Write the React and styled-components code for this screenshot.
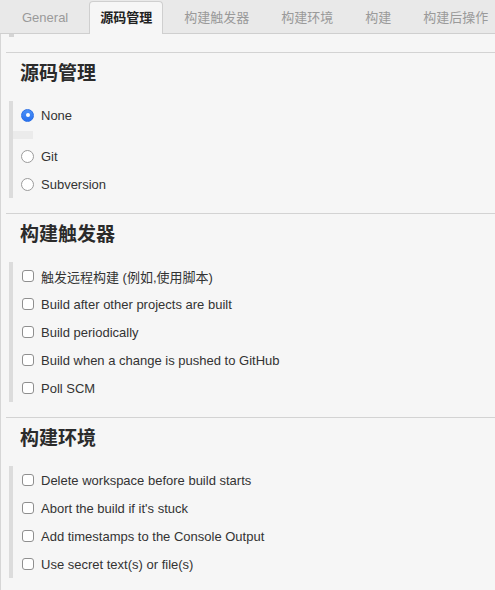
import React from "react";
import styled, { createGlobalStyle } from "styled-components";

const GlobalStyle = createGlobalStyle`
  html, body {
    margin: 0;
    padding: 0;
    background: #f6f6f6;
  }
  body {
    font-family: "Liberation Sans", "Noto Sans CJK SC", Arial, sans-serif;
    font-size: 13px;
    color: #333;
  }
`;

const tabs = ["General", "源码管理", "构建触发器", "构建环境", "构建", "构建后操作"];

const sections = [
  {
    title: "源码管理",
    kind: "radio",
    items: [
      { label: "None", checked: true, spacer: true },
      { label: "Git" },
      { label: "Subversion" },
    ],
  },
  {
    title: "构建触发器",
    kind: "checkbox",
    items: [
      { label: "触发远程构建 (例如,使用脚本)" },
      { label: "Build after other projects are built" },
      { label: "Build periodically" },
      { label: "Build when a change is pushed to GitHub" },
      { label: "Poll SCM" },
    ],
  },
  {
    title: "构建环境",
    kind: "checkbox",
    items: [
      { label: "Delete workspace before build starts" },
      { label: "Abort the build if it's stuck" },
      { label: "Add timestamps to the Console Output" },
      { label: "Use secret text(s) or file(s)" },
    ],
  },
];

export default function App() {
  return (
    <Page>
      <GlobalStyle />
      <TabBar>
        {tabs.map((t, i) => (
          <Tab key={t} $active={i === 1}>
            {t}
          </Tab>
        ))}
      </TabBar>
      <Content>
        <TopMarker />
        {sections.map((s) => (
          <Section key={s.title}>
            <Heading>{s.title}</Heading>
            <Group>
              {s.items.map((item) => (
                <React.Fragment key={item.label}>
                  <Row>
                    {s.kind === "radio" ? (
                      <Radio $checked={item.checked} />
                    ) : (
                      <Checkbox />
                    )}
                    <Label>{item.label}</Label>
                  </Row>
                  {item.spacer && <HiddenBlock />}
                </React.Fragment>
              ))}
            </Group>
          </Section>
        ))}
      </Content>
    </Page>
  );
}

const Page = styled.div`
  width: 495px;
  min-height: 590px;
  background: #f6f6f6;
  overflow: hidden;
`;

const TabBar = styled.div`
  display: flex;
  align-items: flex-end;
  gap: 10px;
  height: 34px;
  padding-left: 11px;
  background: #e9e9e9;
  border-bottom: 1px solid #cfcfcf;
  box-sizing: border-box;
`;

const Tab = styled.div`
  line-height: 31px;
  padding: 0 10px;
  box-sizing: border-box;
  font-size: 13px;
  white-space: nowrap;
  color: ${(p) => (p.$active ? "#222" : "#9a9a9a")};
  font-weight: ${(p) => (p.$active ? "bold" : "normal")};
  background: ${(p) => (p.$active ? "#f6f6f6" : "transparent")};
  border: 1px solid ${(p) => (p.$active ? "#cfcfcf" : "transparent")};
  border-bottom: none;
  border-radius: 4px 4px 0 0;
  margin-bottom: ${(p) => (p.$active ? "-1px" : "0")};
  height: ${(p) => (p.$active ? "33px" : "32px")};
`;

const Content = styled.div`
  border-left: 1px solid #d6d6d6;
  min-height: 556px;
`;

const TopMarker = styled.div`
  width: 5px;
  height: 3px;
  margin-left: 8px;
  background: #d4d4d4;
  margin-bottom: 15px;
`;

const Section = styled.section`
  margin-left: 5px;
  border-top: 1px solid #d3d3d3;
  padding: 10px 0 15px;
`;

const Heading = styled.h2`
  margin: 0 0 16px 14px;
  font-size: 19px;
  line-height: 22px;
  font-weight: bold;
  color: #2b2b2b;
`;

const Group = styled.div`
  margin-left: 3px;
  border-left: 4px solid #dcdcdc;
  display: flex;
  flex-direction: column;
`;

const Row = styled.div`
  display: flex;
  align-items: center;
  height: 28px;
  padding-left: 8px;
  gap: 7px;
`;

const Label = styled.span`
  font-size: 13px;
  color: #333;
  white-space: nowrap;
`;

const Radio = styled.span`
  width: 13px;
  height: 13px;
  box-sizing: border-box;
  border-radius: 50%;
  flex: none;
  position: relative;
  background: ${(p) =>
    p.$checked ? "linear-gradient(#4a90f7, #2a72ef)" : "#fff"};
  border: 1px solid ${(p) => (p.$checked ? "#2a6fe6" : "#9b9b9b")};

  &::after {
    content: "";
    display: ${(p) => (p.$checked ? "block" : "none")};
    position: absolute;
    width: 4px;
    height: 4px;
    border-radius: 50%;
    background: #fff;
    left: 3.5px;
    top: 3.5px;
  }
`;

const Checkbox = styled.span`
  width: 12px;
  height: 12px;
  margin-left: 1px;
  box-sizing: border-box;
  border: 1px solid #8f8f8f;
  border-radius: 3px;
  background: #fff;
  flex: none;
`;

const HiddenBlock = styled.div`
  width: 20px;
  height: 8px;
  margin: 2px 0 3px;
  background: #ebebeb;
`;
